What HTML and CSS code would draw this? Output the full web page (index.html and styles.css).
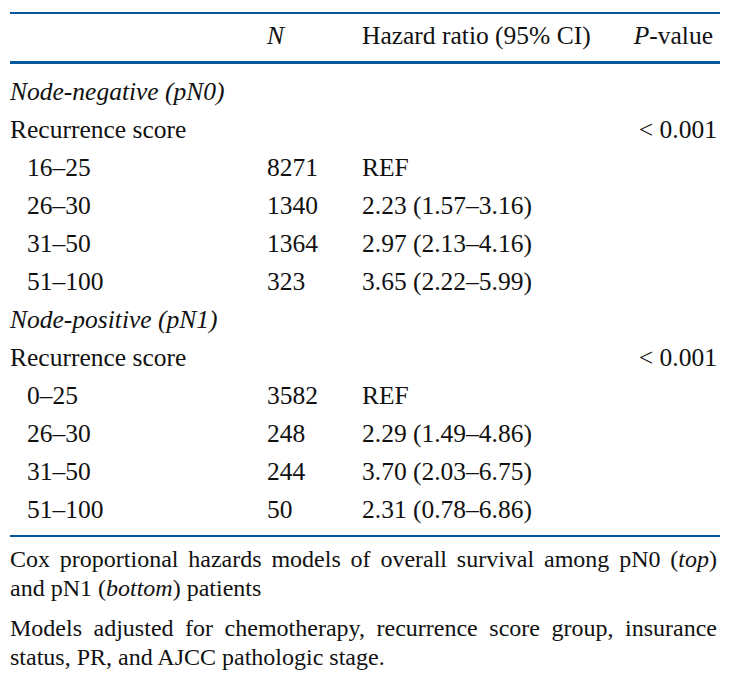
FILE: index.html
```html
<!DOCTYPE html>
<html lang="en">
<head>
<meta charset="utf-8">
<title>Cox proportional hazards models</title>
<link rel="stylesheet" href="styles.css">
</head>
<body>
<div class="table-wrap">
  <div class="head row">
    <div class="c1"></div>
    <div class="c2"><i>N</i></div>
    <div class="c3">Hazard ratio (95% CI)</div>
    <div class="c4 pv"><i>P</i>-value</div>
  </div>
  <div class="body">
    <div class="row"><div class="c1 group"><i>Node-negative (pN0)</i></div></div>
    <div class="row"><div class="c1">Recurrence score</div><div class="c2"></div><div class="c3"></div><div class="c4">&lt; 0.001</div></div>
    <div class="row"><div class="c1 ind">16–25</div><div class="c2">8271</div><div class="c3">REF</div><div class="c4"></div></div>
    <div class="row"><div class="c1 ind">26–30</div><div class="c2">1340</div><div class="c3">2.23 (1.57–3.16)</div><div class="c4"></div></div>
    <div class="row"><div class="c1 ind">31–50</div><div class="c2">1364</div><div class="c3">2.97 (2.13–4.16)</div><div class="c4"></div></div>
    <div class="row"><div class="c1 ind">51–100</div><div class="c2">323</div><div class="c3">3.65 (2.22–5.99)</div><div class="c4"></div></div>
    <div class="row"><div class="c1 group"><i>Node-positive (pN1)</i></div></div>
    <div class="row"><div class="c1">Recurrence score</div><div class="c2"></div><div class="c3"></div><div class="c4">&lt; 0.001</div></div>
    <div class="row"><div class="c1 ind">0–25</div><div class="c2">3582</div><div class="c3">REF</div><div class="c4"></div></div>
    <div class="row"><div class="c1 ind">26–30</div><div class="c2">248</div><div class="c3">2.29 (1.49–4.86)</div><div class="c4"></div></div>
    <div class="row"><div class="c1 ind">31–50</div><div class="c2">244</div><div class="c3">3.70 (2.03–6.75)</div><div class="c4"></div></div>
    <div class="row"><div class="c1 ind">51–100</div><div class="c2">50</div><div class="c3">2.31 (0.78–6.86)</div><div class="c4"></div></div>
  </div>
  <div class="notes">
    <p>Cox proportional hazards models of overall survival among pN0 (<i>top</i>) and pN1 (<i>bottom</i>) patients</p>
    <p>Models adjusted for chemotherapy, recurrence score group, insurance status, PR, and AJCC pathologic stage.</p>
  </div>
</div>
</body>
</html>
```
FILE: styles.css
```css
html, body {
  margin: 0;
  padding: 0;
  background: #ffffff;
}
body {
  font-family: "Liberation Serif", "Times New Roman", serif;
  font-size: 25.5px;
  color: #111111;
}
.table-wrap {
  width: 710px;
  margin: 12px 0 0 10px;
}
.row {
  display: grid;
  grid-template-columns: 257px 95px 1fr auto;
  line-height: 38px;
  white-space: nowrap;
}
.head {
  border-top: 2px solid #04579b;
  border-bottom: 3px solid #04579b;
  padding: 3px 0 6px;
}
.body {
  padding: 9px 0 6px;
  border-bottom: 2px solid #04579b;
}
.group {
  grid-column: 1 / -1;
}
.ind {
  padding-left: 17px;
}
.c4 {
  text-align: right;
  padding-right: 3px;
}
.pv {
  padding-right: 7px;
}
.notes {
  padding-top: 8px;
  font-size: 24px;
}
.notes p {
  margin: 0 0 11px;
  line-height: 29px;
  width: 707px;
  text-align: justify;
}
```
